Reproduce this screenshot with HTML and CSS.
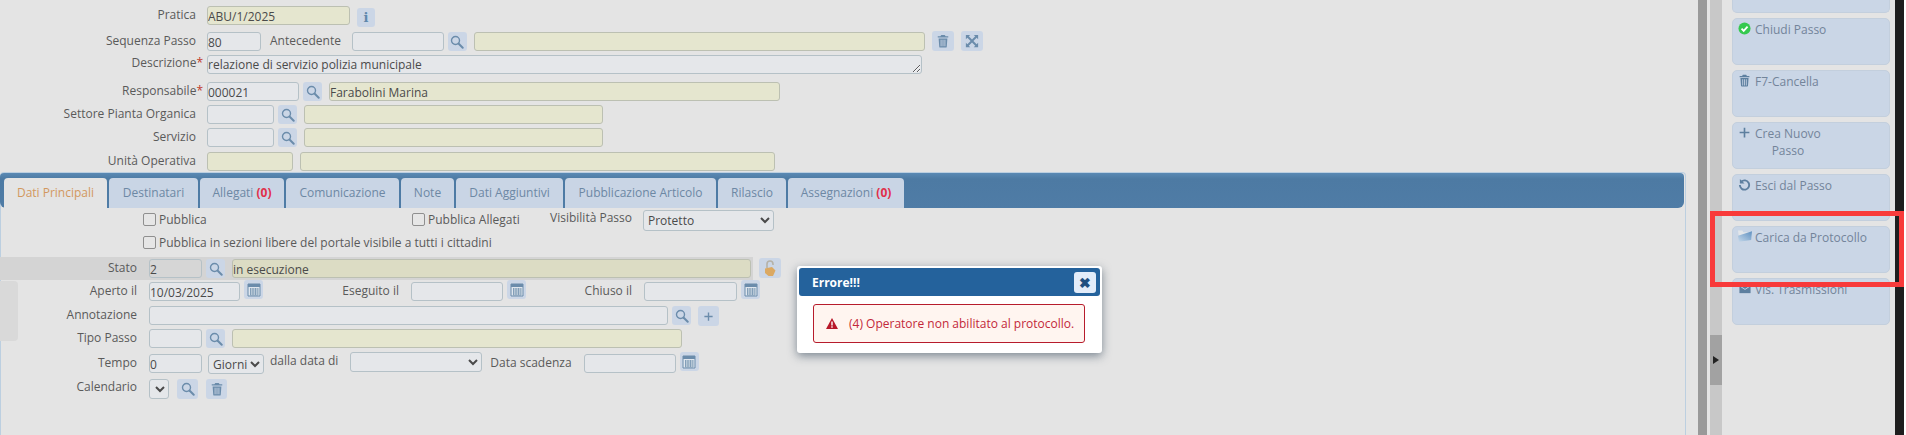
FILE: index.html
```html
<!DOCTYPE html>
<html lang="it">
<head>
    <meta charset="UTF-8">
    <title>Passo pratica</title>
    <link rel="stylesheet" href="styles.css">
</head>
<body>
    <svg class="defs" width="0" height="0">
        <symbol id="i-search" viewBox="0 0 14 14"><circle cx="5.5" cy="5.5" r="4" fill="none" stroke="currentColor" stroke-width="1.4"/><path d="M8.5 8.5l4.2 4.2" stroke="currentColor" stroke-width="2" stroke-linecap="round"/></symbol>
        <symbol id="i-trash" viewBox="0 0 14 16"><path d="M5 1h4l1 1.5h3V4H1V2.500h3zM2 5h10l-.7 9.500q-.1 1-1 1H3.700q-.9 0-1-1zM4.300 6.500v7.500h1V6.500zm2.200 0v7.500h1V6.500zm2.200 0v7.500h1V6.500z" fill="currentColor" fill-rule="evenodd"/></symbol>
        <symbol id="i-expand" viewBox="0 0 16 16"><path d="M1 1h5L4.300 2.700 8 6.400l3.700-3.700L10 1h5v5l-1.700-1.700L9.600 8l3.700 3.700L15 10v5h-5l1.700-1.700L8 9.600l-3.700 3.700L6 15H1v-5l1.700 1.700L6.400 8 2.700 4.300 1 6z" fill="currentColor"/></symbol>
        <symbol id="i-cal" viewBox="0 0 14 14"><path d="M1 1h12v12H1z" fill="#dfe6ee" stroke="currentColor"/><path d="M1 1h12v3H1z" fill="currentColor"/><path d="M3 6h8M3 8h8M3 10h8M3 12h8M3.500 5v7M6 5v7M8.500 5v7M11 5v7" stroke="currentColor" stroke-width=".7"/></symbol>
        <symbol id="i-plus" viewBox="0 0 12 12"><path d="M6 1.500v9M1.500 6h9" stroke="currentColor" stroke-width="1.500"/></symbol>
    </svg>

    <div class="app">
        <div class="main">
            <div class="row r1">
                <label class="lbl lbl-top">Pratica</label>
                <input class="fld ro w143" value="ABU/1/2025" readonly>
                <span class="ib ib-info">i</span>
            </div>
            <div class="row r2">
                <label class="lbl lbl-top">Sequenza Passo</label>
                <input class="fld w54" value="80">
                <label class="lbl lbl-ante">Antecedente</label>
                <input class="fld w92">
                <span class="ib"><svg class="ico"><use href="#i-search"/></svg></span>
                <input class="fld ro w451">
                <span class="ib ib-tall"><svg class="ico"><use href="#i-trash"/></svg></span>
                <span class="ib ib-tall"><svg class="ico"><use href="#i-expand"/></svg></span>
            </div>
            <div class="row r3">
                <label class="lbl lbl-top lift">Descrizione<span class="req">*</span></label>
                <textarea class="fld area w715">relazione di servizio polizia municipale</textarea>
            </div>
            <div class="row r4">
                <label class="lbl lbl-top">Responsabile<span class="req">*</span></label>
                <input class="fld w92" value="000021">
                <span class="ib"><svg class="ico"><use href="#i-search"/></svg></span>
                <input class="fld ro w451" value="Farabolini Marina">
            </div>
            <div class="row r5">
                <label class="lbl lbl-top">Settore Pianta Organica</label>
                <input class="fld w67">
                <span class="ib"><svg class="ico"><use href="#i-search"/></svg></span>
                <input class="fld ro w299">
            </div>
            <div class="row r5">
                <label class="lbl lbl-top">Servizio</label>
                <input class="fld w67">
                <span class="ib"><svg class="ico"><use href="#i-search"/></svg></span>
                <input class="fld ro w299">
            </div>
            <div class="row r6">
                <label class="lbl lbl-top">Unità Operativa</label>
                <input class="fld ro w86">
                <input class="fld ro w475 next">
            </div>

            <div class="panel">
                <div class="tabs">
                    <span class="tab active t103">Dati Principali</span>
                    <span class="tab t89">Destinatari</span>
                    <span class="tab t84">Allegati <b>(0)</b></span>
                    <span class="tab t113">Comunicazione</span>
                    <span class="tab t53">Note</span>
                    <span class="tab t107">Dati Aggiuntivi</span>
                    <span class="tab t151">Pubblicazione Articolo</span>
                    <span class="tab t68">Rilascio</span>
                    <span class="tab t116">Assegnazioni <b>(0)</b></span>
                </div>
                <div class="tab-body">
                    <div class="row c1">
                        <label class="chk c269"><input type="checkbox"> Pubblica</label>
                        <label class="chk c138"><input type="checkbox"> Pubblica Allegati</label>
                        <label class="lbl l93">Visibilità Passo</label>
                        <select class="fld sel w131"><option>Protetto</option></select>
                    </div>
                    <div class="row c2">
                        <label class="chk"><input type="checkbox"> Pubblica in sezioni libere del portale visibile a tutti i cittadini</label>
                    </div>
                    <div class="row band">
                        <label class="lbl lbl-in">Stato</label>
                        <input class="fld dark w53" value="2">
                        <span class="ib"><svg class="ico"><use href="#i-search"/></svg></span>
                        <input class="fld ro dark w519" value="in esecuzione">
                        <span class="ib ib-lock">
                            <svg class="ico-lock" viewBox="0 0 12 17"><path d="M3 8V4a3 3 0 0 1 6 0v1" fill="none" stroke="#b5b2a8" stroke-width="1.600"/><path d="M1 8.500L8 7l3.500 3.500L9 16H4.500L1 13z" fill="#dba963"/></svg>
                        </span>
                    </div>
                    <div class="row c3">
                        <label class="lbl lbl-in">Aperto il</label>
                        <input class="fld w91" value="10/03/2025">
                        <span class="ib up"><svg class="ico"><use href="#i-cal"/></svg></span>
                        <label class="lbl l136">Eseguito il</label>
                        <input class="fld w92">
                        <span class="ib up"><svg class="ico"><use href="#i-cal"/></svg></span>
                        <label class="lbl l106">Chiuso il</label>
                        <input class="fld w93">
                        <span class="ib up"><svg class="ico"><use href="#i-cal"/></svg></span>
                    </div>
                    <div class="row c4">
                        <label class="lbl lbl-in">Annotazione</label>
                        <input class="fld w519">
                        <span class="ib"><svg class="ico"><use href="#i-search"/></svg></span>
                        <span class="ib ib-wide"><svg class="ico ico-sm"><use href="#i-plus"/></svg></span>
                    </div>
                    <div class="row c4">
                        <label class="lbl lbl-in">Tipo Passo</label>
                        <input class="fld w53">
                        <span class="ib"><svg class="ico"><use href="#i-search"/></svg></span>
                        <input class="fld ro w450">
                    </div>
                    <div class="row c5">
                        <label class="lbl lbl-in">Tempo</label>
                        <input class="fld w53" value="0">
                        <select class="fld sel w56 m6"><option>Giorni</option></select>
                        <label class="lbl lbl-dalla">dalla data di</label>
                        <select class="fld sel w132 m12 up"><option></option></select>
                        <label class="lbl lbl-scad">Data scadenza</label>
                        <input class="fld w92">
                        <span class="ib up"><svg class="ico"><use href="#i-cal"/></svg></span>
                    </div>
                    <div class="row c6">
                        <label class="lbl lbl-in lift">Calendario</label>
                        <select class="fld sel w20"><option></option></select>
                        <span class="ib ib-wide m8"><svg class="ico"><use href="#i-search"/></svg></span>
                        <span class="ib ib-wide m8"><svg class="ico"><use href="#i-trash"/></svg></span>
                    </div>
                </div>
                <div class="handle"></div>
            </div>
        </div>

        <div class="scroll"></div>
        <div class="splitter"><div class="grip"></div></div>

        <div class="side">
            <div class="btn btn-cut"></div>
            <div class="btn">
                <svg class="bi" viewBox="0 0 14 14"><circle cx="7" cy="7" r="6.500" fill="#35c94f"/><path d="M3.800 7.200l2.300 2.300 4.200-4.500" fill="none" stroke="#fff" stroke-width="2"/></svg>
                <span>Chiudi Passo</span>
            </div>
            <div class="btn">
                <svg class="bi"><use href="#i-trash"/></svg>
                <span>F7-Cancella</span>
            </div>
            <div class="btn">
                <svg class="bi"><use href="#i-plus"/></svg>
                <span class="two">Crea Nuovo<br>Passo</span>
            </div>
            <div class="btn">
                <svg class="bi" viewBox="0 0 14 14"><path d="M3.500 4A5 5 0 1 1 2 7.500" fill="none" stroke="currentColor" stroke-width="2"/><path d="M2 1v5h5z" fill="currentColor"/></svg>
                <span>Esci dal Passo</span>
            </div>
            <div class="btn">
                <svg class="bi bi-wide" viewBox="0 0 16 14">
                    <defs><linearGradient id="folder" x1="0" y1="1" x2="1" y2="0"><stop offset="0" stop-color="#c5d8ea"/><stop offset="1" stop-color="#5f90c0"/></linearGradient></defs>
                    <path d="M0 0h5l1 2h9v6H1z" fill="#e2e6ea"/><path d="M0 6l16-5-1 10-14 2z" fill="url(#folder)"/>
                </svg>
                <span>Carica da Protocollo</span>
            </div>
            <div class="btn">
                <svg class="bi bi-wide" viewBox="0 0 14 14"><path d="M1 4h12v8H1z" fill="currentColor"/><path d="M1 4l6 4 6-4" fill="none" stroke="#cad6e6"/></svg>
                <span>Vis. Trasmissioni</span>
            </div>
        </div>
        <div class="edge"></div>
    </div>

    <!-- finestra di errore -->
    <div class="dialog">
        <div class="dialog-title">
            <span>Errore!!!</span>
            <span class="dialog-close">✖</span>
        </div>
        <div class="alert">
            <svg class="alert-ico" viewBox="0 0 12 11"><path d="M6 0l6 11H0z" fill="#b8182a"/><path d="M5.300 3.500h1.400v4H5.300zM5.300 8.300h1.400v1.400H5.300z" fill="#fff"/></svg>
            <span>(4) Operatore non abilitato al protocollo.</span>
        </div>
    </div>

    <!-- riquadro rosso sopra il pulsante -->
    <div class="mark"></div>
</body>
</html>
```

FILE: styles.css
```css
html, body {
    margin: 0;
    height: 435px;
    overflow: hidden;
    background: #fff;
}
body {
    font-family: "Open Sans", "Liberation Sans", sans-serif;
    font-size: 12px;
    color: #5a5a5a;
}
.defs {
    position: absolute;
}
.app {
    display: flex;
    width: 1904px;
    height: 435px;
    background: #e4e4e4;
}
.main {
    width: 1698px;
    flex: none;
    padding-top: 6px;
    box-sizing: border-box;
}

/* righe */
.row {
    display: flex;
    align-items: flex-start;
    height: 19px;
}
.r2 { margin-top: 7px; }
.r3 { margin-top: 4px; }
.r4 { margin-top: 8px; }
.r5 { margin-top: 4px; }
.r6 { margin-top: 5px; }
.c1 { height: 21px; margin-top: 2px; }
.c2 { margin-top: 4px; height: 15px; }
.band {
    height: 23px;
    width: 753px;
    margin-top: 7px;
    padding-top: 2px;
    box-sizing: border-box;
    background: #d4d4d4;
}
.c3 { margin-top: 2px; }
.c4 { margin-top: 5px; }
.c4 + .c4 { margin-top: 4px; }
.c5 { margin-top: 6px; }
.c6 { margin-top: 6px; }

/* etichette */
.lbl {
    flex: none;
    text-align: right;
    line-height: 17px;
    white-space: nowrap;
}
.lift { margin-top: -1px; }
.lbl-top { width: 196px; margin-right: 11px; }
.lbl-in { width: 137px; margin-right: 12px; }
.lbl-ante { margin: 0 11px 0 9px; }
.lbl-dalla { margin-left: 6px; line-height: 14px; }
.lbl-scad { margin: 0 12px 0 8px; }
.l93 { width: 82px; margin-right: 11px; line-height: 15px; }
.l136 { width: 136px; margin-right: 12px; }
.l106 { width: 106px; margin-right: 12px; }
.req {
    color: #c0392b;
    margin-right: -7px;
}

/* campi */
.fld {
    flex: none;
    height: 19px;
    padding: 1px 1px 0 0;
    box-sizing: border-box;
    font: 12px "Open Sans", "Liberation Sans", sans-serif;
    color: #4a4a4a;
    background: #e5e7ea;
    border: 1px solid #b5c1c7;
    border-radius: 3px;
    outline: none;
}
.ro { background: #e5e6cf; border-color: #bcc0b2; }
.dark { background: #d6d6d6; }
.ro.dark { background: #dcdcc4; }
.area { resize: both; height: 19px; overflow: hidden; line-height: 15px; }
.sel { height: 20px; padding: 0; }
.w20 { width: 20px; }
.w53 { width: 53px; }
.w54 { width: 54px; }
.w56 { width: 56px; }
.w67 { width: 67px; }
.w86 { width: 86px; }
.w91 { width: 91px; }
.w92 { width: 92px; }
.w93 { width: 93px; }
.w131 { width: 131px; height: 21px; }
.w132 { width: 132px; }
.w143 { width: 143px; }
.w299 { width: 299px; }
.w450 { width: 450px; }
.w451 { width: 451px; }
.w475 { width: 475px; }
.w519 { width: 519px; }
.w715 { width: 715px; }
.next { margin-left: 7px; }
.m6 { margin-left: 6px; }
.m8 { margin-left: 8px !important; }
.m12 { margin-left: 12px; }
.up { margin-top: -2px; }

/* pulsanti icona */
.ib {
    flex: none;
    width: 19px;
    height: 19px;
    margin-left: 4px;
    display: flex;
    align-items: center;
    justify-content: center;
    background: #cbd6e6;
    border-radius: 3px;
    color: #6b8cab;
}
.ib + .fld { margin-left: 7px; }
.ib + .lbl { margin-left: 0; }
.ib + .ib { margin-left: 7px; }
.ico {
    width: 14px;
    height: 14px;
}
.ico-sm { width: 11px; height: 11px; }
.ico-lock { width: 12px; height: 17px; }
.ib-wide { width: 21px; height: 20px; }
.ib-tall {
    width: 22px;
    height: 20px;
    margin-top: -1px;
    margin-left: 7px;
}
.ib-info {
    width: 18px;
    margin-left: 7px;
    margin-top: 2px;
    font: bold 13px "DejaVu Serif", serif;
    color: #5f88ab;
}
.ib-lock {
    width: 22px;
    height: 20px;
    margin-left: 8px;
    margin-top: -1px;
}

/* pannello con le schede */
.panel {
    position: relative;
    width: 1686px;
    height: 264px;
    margin-top: 1px;
    box-sizing: border-box;
    border: 1px solid #bccfe0;
    border-bottom: none;
    border-radius: 4px 4px 0 0;
}
.tabs {
    display: flex;
    height: 35px;
    margin: 0 1px 0 -1px;
    padding: 5px 0 0 4px;
    box-sizing: border-box;
    gap: 2px;
    background: linear-gradient(#5a89b4, #4d7aa3 6px, #4f7ca6);
    border-radius: 4px 4px 6px 6px;
}
.tab {
    flex: none;
    box-sizing: border-box;
    height: 30px;
    line-height: 30px;
    text-align: center;
    color: #6d88a4;
    background: #c9d5e5;
    border-radius: 4px 4px 0 0;
}
.tab b { color: #e0304a; }
.tab.active {
    color: #d2985f;
    background: #e4e4e4;
}
.t103 { width: 103px; }
.t89 { width: 89px; }
.t84 { width: 84px; }
.t113 { width: 113px; }
.t53 { width: 53px; }
.t107 { width: 107px; }
.t151 { width: 151px; }
.t68 { width: 68px; }
.t116 { width: 116px; }
.tab-body {
    margin-left: -1px;
}

.chk {
    flex: none;
    display: flex;
    align-items: center;
    gap: 3px;
    height: 15px;
    margin-top: 2px;
    white-space: nowrap;
}
.chk input {
    appearance: none;
    width: 13px;
    height: 13px;
    margin: 0;
    background: #e6e6e6;
    border: 1px solid #8f8f8f;
    border-radius: 2px;
}
.c1 .c269 { width: 269px; margin-left: 143px; }
.c1 .c138 { width: 138px; }
.c2 .chk { margin: 0 0 0 143px; }

.handle {
    position: absolute;
    left: -1px;
    top: 108px;
    width: 18px;
    height: 60px;
    background: #d9d9d9;
    border-radius: 0 4px 4px 0;
}

/* colonna destra */
.scroll {
    width: 9px;
    flex: none;
    background: #999;
}
.splitter {
    width: 12px;
    flex: none;
    margin-left: 3px;
    padding-top: 335px;
    box-sizing: border-box;
    background: #c8c8c8;
}
.grip {
    height: 50px;
    background: #a2a2a2;
    position: relative;
}
.grip::after {
    content: "";
    position: absolute;
    left: 3px;
    top: 21px;
    border-left: 6px solid #222;
    border-top: 4px solid transparent;
    border-bottom: 4px solid transparent;
}
.side {
    width: 173px;
    flex: none;
    padding: 0 5px 0 10px;
    box-sizing: border-box;
    display: flex;
    flex-direction: column;
    gap: 5px;
}
.btn {
    height: 47px;
    flex: none;
    display: flex;
    align-items: flex-start;
    padding: 2px 4px;
    box-sizing: border-box;
    color: #73849a;
    background: #cad6e6;
    border: 1px solid #c3cfdd;
    border-radius: 5px;
    line-height: 17px;
}
.btn-cut {
    height: 13px;
    border-radius: 0 0 5px 5px;
    border-top: none;
}
.bi {
    flex: none;
    width: 13px;
    height: 13px;
    margin: 1px 4px 0 1px;
    color: #5d7f9f;
}
.bi-wide { width: 14px; margin-right: 3px; }
.two {
    text-align: center;
}
.edge {
    width: 9px;
    flex: none;
    background: #1e1e1e;
}

/* finestra errore */
.dialog {
    position: absolute;
    left: 797px;
    top: 266px;
    width: 305px;
    height: 87px;
    padding: 2px;
    box-sizing: border-box;
    background: #fff;
    border-radius: 3px;
    box-shadow: 0 3px 10px rgba(40, 60, 80, 0.55);
}
.dialog-title {
    display: flex;
    align-items: center;
    justify-content: space-between;
    height: 28px;
    padding: 0 4px 0 13px;
    color: #fff;
    font-weight: 700;
    background: #24629c;
    border-radius: 3px;
}
.dialog-close {
    width: 22px;
    height: 21px;
    line-height: 21px;
    text-align: center;
    font-size: 14px;
    color: #1f4f80;
    background: #e2ecf9;
    border-radius: 3px;
}
.alert {
    display: flex;
    align-items: center;
    gap: 11px;
    height: 39px;
    margin: 8px 15px 0 14px;
    padding-left: 12px;
    box-sizing: border-box;
    color: #c3283a;
    background: #fff5f0;
    border: 1px solid #b71c2c;
    border-radius: 3px;
}
.alert-ico {
    width: 12px;
    height: 11px;
    flex: none;
}

.mark {
    position: absolute;
    left: 1710px;
    top: 211px;
    width: 194px;
    height: 76px;
    box-sizing: border-box;
    border: 5px solid #f83a3a;
}
```
